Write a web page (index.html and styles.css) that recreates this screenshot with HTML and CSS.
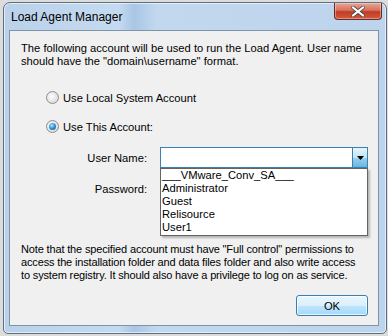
FILE: index.html
```html
<!DOCTYPE html>
<html>
<head>
<meta charset="utf-8">
<link rel="stylesheet" href="styles.css">
</head>
<body>
<div class="window">
  <div class="titlebar">
    <span class="title">Load Agent Manager</span>
    <div class="close">
      <svg width="14" height="11" viewBox="0 0 14 11"><path d="M2 1.5 L12 9.5 M12 1.5 L2 9.5" stroke="#4a4a4a" stroke-width="3.6" stroke-linecap="round"/><path d="M2 1.5 L12 9.5 M12 1.5 L2 9.5" stroke="#fff" stroke-width="2.2" stroke-linecap="round"/></svg>
    </div>
  </div>
  <div class="client">
    <p class="intro">The following account will be used to run the Load Agent. User name<br>should have the "domain\username" format.</p>
    <div class="radio-row first"><span class="radio"></span><span>Use Local System Account</span></div>
    <div class="radio-row second"><span class="radio checked"></span><span>Use This Account:</span></div>
    <div class="fields">
      <div class="field-row">
        <span class="label">User Name:</span>
        <div class="combo">
          <div class="combo-btn"><svg width="7" height="4" viewBox="0 0 7 4"><path d="M0 0 H7 L3.5 4 Z" fill="#000"/></svg></div>
          <ul class="list">
            <li>___VMware_Conv_SA___</li>
            <li>Administrator</li>
            <li>Guest</li>
            <li>Relisource</li>
            <li>User1</li>
          </ul>
        </div>
      </div>
      <div class="field-row pw">
        <span class="label">Password:</span>
        <div class="input"></div>
      </div>
    </div>
    <p class="note">Note that the specified account must have "Full control" permissions to<br>access the installation folder and data files folder and also write access<br>to system registry. It should also have a privilege to log on as service.</p>
    <div class="buttons"><div class="ok">OK</div></div>
  </div>
</div>
</body>
</html>
```

FILE: styles.css
```css
html, body {
  margin: 0;
  padding: 0;
}
body {
  width: 388px;
  height: 336px;
  background: #dcdcdc;
  font-family: "Liberation Sans", Arial, sans-serif;
  font-size: 11.2px;
  color: #000;
  overflow: hidden;
}
.window {
  box-sizing: border-box;
  margin: 2px 0 0 3px;
  width: 384px;
  height: 332px;
  border: 1px solid #5d6f83;
  border-radius: 7px 7px 5px 5px;
  background: linear-gradient(90deg, #b9d1ea 0%, #c4daf0 30%, #a9c6e4 34%, #c2d8ef 40%, #bcd4ec 100%);
  padding: 0 7px 7px 5px;
  display: flex;
  flex-direction: column;
  box-shadow: inset 0 0 0 1px rgba(255,255,255,0.6);
}
.titlebar {
  height: 27px;
  display: flex;
  align-items: flex-start;
  justify-content: space-between;
  flex-shrink: 0;
}
.title {
  font-family: "Liberation Sans", Arial, sans-serif;
  font-size: 12px;
  margin: 7px 0 0 2px;
  color: #000;
}
.close {
  width: 48px;
  height: 17px;
  margin: 0 -3px 0 0;
  box-sizing: border-box;
  border: 1px solid #6b2a22;
  border-top: none;
  border-radius: 0 0 4px 4px;
  background: linear-gradient(180deg, #e8a493 0%, #d7735e 45%, #c23b22 55%, #d25a3f 100%);
  display: flex;
  align-items: center;
  justify-content: center;
  box-shadow: inset 0 0 0 1px rgba(255,255,255,0.35);
}
.client {
  flex: 1;
  background: #f0f0f0;
  border: 1px solid #7f93a9;
  position: relative;
  padding: 0 10px 0 11px;
}
.intro, .note {
  white-space: nowrap;
  line-height: 13px;
}
.intro {
  margin: 11px 0 0 0;
}
.radio-row {
  display: flex;
  align-items: center;
  gap: 4px;
  margin-left: 25px;
  height: 13px;
}
.radio-row.first { margin-top: 23px; }
.radio-row.second { margin-top: 16px; }
.radio {
  width: 11px;
  height: 11px;
  border-radius: 50%;
  border: 1px solid #8d8d8d;
  background: radial-gradient(circle at 40% 40%, #fdfdfd 0%, #e2e2e2 60%, #cfcfcf 100%);
  position: relative;
  flex-shrink: 0;
}
.radio.checked::after {
  content: "";
  position: absolute;
  left: 2px;
  top: 2px;
  width: 7px;
  height: 7px;
  border-radius: 50%;
  background: radial-gradient(circle at 40% 35%, #b9e6ff 0%, #2a8fd6 50%, #17508f 100%);
}
.fields {
  margin-top: 14px;
  display: flex;
  flex-direction: column;
  gap: 10px;
}
.field-row {
  display: flex;
  align-items: center;
  height: 21px;
}
.label {
  width: 139px;
  text-align: right;
  padding-right: 13px;
  box-sizing: border-box;
}
.combo, .input {
  width: 208px;
  height: 21px;
  box-sizing: border-box;
  background: #fff;
  position: relative;
}
.combo {
  border: 1px solid #3c7fb1;
}
.input {
  border: 1px solid #abadb3;
}
.combo-btn {
  position: absolute;
  right: 0;
  top: 0;
  bottom: 0;
  width: 15px;
  box-sizing: border-box;
  border-left: 1px solid #3c7fb1;
  background: linear-gradient(180deg, #e5f4fc 0%, #c4e5f6 50%, #98d1ef 51%, #6ab6e2 100%);
  display: flex;
  align-items: center;
  justify-content: center;
}
.list {
  position: absolute;
  left: -1px;
  top: 20px;
  width: 208px;
  margin: 0;
  padding: 0 0 1px 0;
  list-style: none;
  background: #fff;
  border: 1px solid #646464;
  box-sizing: border-box;
  z-index: 2;
  box-shadow: 2px 2px 2px rgba(0,0,0,0.25);
}
.list li {
  height: 13px;
  line-height: 13px;
  padding-left: 1px;
}
.note {
  margin: 44px 0 0 0;
  font-size: 11px;
  letter-spacing: -0.15px;
}
.buttons {
  display: flex;
  justify-content: flex-end;
  margin-top: 13px;
}
.ok {
  width: 72px;
  height: 21px;
  box-sizing: border-box;
  border: 1px solid #3c7fb1;
  border-radius: 3px;
  background: linear-gradient(180deg, #eaf6fd 0%, #d9f0fc 50%, #bee6fd 51%, #a7d9f5 100%);
  display: flex;
  align-items: center;
  justify-content: center;
  box-shadow: inset 0 0 0 1px rgba(255,255,255,0.7);
}
```
